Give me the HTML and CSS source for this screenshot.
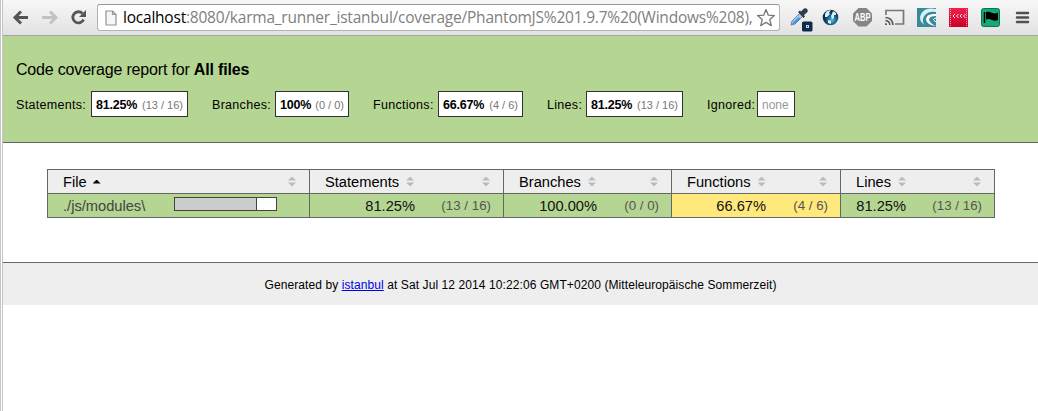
FILE: index.html
```html
<!DOCTYPE html>
<html lang="en">
<head>
<meta charset="utf-8">
<title>Code coverage report for All files</title>
<link rel="stylesheet" href="styles.css">
</head>
<body>
<div class="window">
<header class="toolbar">
  <svg class="nav" width="94" height="35" viewBox="0 0 94 35" fill="none">
    <path d="M13.500 17.500H27M20 11.500L14 17.500L20 23.500" stroke="#555" stroke-width="3"/>
    <path d="M41 17.500H55M49 11.500L55 17.500L49 23.500" stroke="#c3c3c3" stroke-width="3"/>
    <path d="M81.500 13.500A5.600 5.600 0 1 0 82.600 19.500" stroke="#555" stroke-width="2.800"/>
    <path d="M85 10V17H78Z" fill="#555"/>
  </svg>
  <div class="address">
    <svg width="12" height="16" viewBox="0 0 12 16"><path d="M1 1H7.5L11 4.5V15H1ZM7.5 1V4.5H11" fill="#f6f6f6" stroke="#929292" stroke-width="1.2"/></svg>
    <div class="url"><span>localhost</span>:8080/karma_runner_istanbul/coverage/PhantomJS%201.9.7%20(Windows%208),</div>
    <svg class="star" width="20" height="20" viewBox="0 0 20 20"><path d="M10 1.5L12.3 7.2L18.5 7.6L13.8 11.6L15.3 17.6L10 14.4L4.7 17.6L6.2 11.6L1.5 7.6L7.7 7.2Z" fill="#fff" stroke="#777" stroke-width="1.3" stroke-linejoin="round"/></svg>
  </div>
  <svg class="extensions" width="258" height="35" viewBox="780 0 258 35">
    <defs>
      <linearGradient id="red" x2="0" y2="1"><stop stop-color="#f0224b"/><stop offset="1" stop-color="#c9002a"/></linearGradient>
      <radialGradient id="globe" cx=".6" cy=".65"><stop stop-color="#69bbe0"/><stop offset=".5" stop-color="#1f6da0"/><stop offset="1" stop-color="#0b2e4c"/></radialGradient>
    </defs>
    <path d="M791 25L792 21L800 13L803 16L795 24Z" fill="#9ccdf4" stroke="#68839b"/>
    <path d="M792 23.5L799 17L800 19L794 24Z" fill="#3b8ee0"/>
    <path d="M798 12L800 10.5L801 11.5L804 8.5Q806 7.5 807.5 9.5Q808.5 11.5 806.5 13L804 15L805 16.5L803.5 18Z" fill="#343c45"/>
    <rect x="802" y="21.500" width="10.500" height="10" rx="1.500" fill="#102a4b"/><rect x="806" y="25" width="3" height="3" fill="#c5ddf5"/><rect x="807" y="26" width="1" height="1" fill="#102a4b"/>
    <circle cx="830.500" cy="17.500" r="7.800" fill="url(#globe)"/>
    <path d="M825 14L827 11L831 10L829 13L830 14L827 17L825 17ZM833 11L836 13L836 15L834 15L834 18L832 19L831 16L832 14ZM828 20L831 21L831 24L828 23Z" fill="#d9f1fa"/>
    <path d="M858.500 8H866.500L872 13.500V21L866.500 26.500H858.500L853 21V13.500Z" fill="#858585"/>
    <text class="abp" x="854.500" y="21" textLength="16" lengthAdjust="spacingAndGlyphs">ABP</text>
    <path d="M886 15V10.500H903.500V24H895" fill="none" stroke="#777" stroke-width="1.700"/>
    <path d="M885.500 17.500Q892.500 18 893 25M885.500 20.500Q889.500 21 890 25" fill="none" stroke="#555" stroke-width="1.500"/><path d="M885 23Q887 23 887 25H885Z" fill="#555"/>
    <rect x="917" y="8" width="19" height="19" fill="#388a98"/>
    <path d="M936 9Q925 7 921 14Q918 20 924 25Q921 18 926 14Q929 11 936 12" fill="#dbeff1"/><path d="M936 14Q926 13 926 20Q927 25 936 26Q929 23 929 19Q930 16 936 16" fill="#fff"/>
    <path d="M936 18Q931 19 936 22" fill="none" stroke="#fff"/>
    <rect x="949" y="8" width="19" height="19" fill="url(#red)"/>
    <path d="M950.500 9V27M966.500 9V27" stroke="#ff9aac" stroke-dasharray="1 1"/><path d="M955 14L953 16L955 18M958.500 14L956.500 16L958.500 18M962 14L960 16L962 18M965.500 14L963.500 16L965.500 18" fill="none" stroke="#ffe3e8" stroke-width="1"/>
    <rect x="981.500" y="8.500" width="18" height="18" rx="2" fill="#16a77a" stroke="#0b7454"/><path d="M984.500 12V23" stroke="#000" stroke-width="1.500"/><path d="M986 12Q989 11 992 13Q995 14 998 12.500V20Q995 21.500 992 20Q989 18.500 986 19.500Z"/>
    <path d="M1017 13H1028M1017 17.500H1028M1017 22H1028" stroke="#505050" stroke-width="2.500" stroke-linecap="round"/>
  </svg>
</header>
<main>
  <section class="summary">
    <h1>Code coverage report for <b>All files</b></h1>
    <div class="metrics">
      <div class="metric statements"><span class="name">Statements:</span><span class="value"><b>81.25%</b><small>(13 / 16)</small></span></div>
      <div class="metric branches"><span class="name">Branches:</span><span class="value"><b>100%</b><small>(0 / 0)</small></span></div>
      <div class="metric functions"><span class="name">Functions:</span><span class="value"><b>66.67%</b><small>(4 / 6)</small></span></div>
      <div class="metric lines"><span class="name">Lines:</span><span class="value"><b>81.25%</b><small>(13 / 16)</small></span></div>
      <div class="metric ignored"><span class="name">Ignored:</span><span class="value none">none</span></div>
    </div>
  </section>
  <section class="report">
    <div class="row head">
      <div class="cell"><span>File</span><i class="up"></i><i class="sort"></i></div>
      <div class="cell"><span>Statements</span><i class="sort near"></i><i class="sort"></i></div>
      <div class="cell"><span>Branches</span><i class="sort near"></i><i class="sort"></i></div>
      <div class="cell"><span>Functions</span><i class="sort near"></i><i class="sort"></i></div>
      <div class="cell"><span>Lines</span><i class="sort near"></i><i class="sort"></i></div>
    </div>
    <div class="row data">
      <div class="cell file"><span>./js/modules\</span><div class="bar"><div class="fill"></div></div></div>
      <div class="cell"><span>81.25%</span><small>(13 / 16)</small></div>
      <div class="cell"><span>100.00%</span><small class="short">(0 / 0)</small></div>
      <div class="cell medium"><span>66.67%</span><small class="short">(4 / 6)</small></div>
      <div class="cell"><span>81.25%</span><small>(13 / 16)</small></div>
    </div>
  </section>
</main>
<footer>Generated by <a href="#">istanbul</a> at Sat Jul 12 2014 10:22:06 GMT+0200 (Mitteleuropäische Sommerzeit)</footer>
</div>
</body>
</html>
```
FILE: styles.css
```css
* { box-sizing: border-box; }
body { margin: 0; background: #fff; font-family: "Liberation Sans", Arial, sans-serif; color: #000; overflow: hidden; }
.window { height: 411px; border-left: 3px double #c5c5c5; }
.toolbar { height: 36px; display: flex; align-items: flex-start; background: linear-gradient(#f7f7f7, #e2e2e2); border-bottom: 1px solid #a5a5a5; }
.nav { display: block; flex: none; margin: 0 1px 0 -2px; }
.address { width: 683px; height: 27px; margin: 4px 0 0 1px; flex: none; display: flex; align-items: center; padding-left: 7px; background: #fff; border: 1px solid #b2b2b2; border-top-color: #999; border-radius: 3px; }
.url { font-family: "Open Sans", "Noto Sans", sans-serif; font-size: 15.5px; letter-spacing: -.22px; line-height: 24px; color: #808080; width: 633px; margin: -1px 0 0 6px; white-space: nowrap; }
.url span { color: #000; }
.star { flex: none; }
.extensions { display: block; flex: none; }
.abp { font: bold 10px "Liberation Sans", sans-serif; fill: #fff; }
.summary { height: 107px; padding: 24px 0 0 13px; background: #b5d592; border-bottom: 1px solid #666; }
h1 { margin: 0; font-size: 16px; line-height: 19px; letter-spacing: -.18px; font-weight: normal; white-space: nowrap; }
.metrics { display: flex; gap: 24px; margin-top: 12px; font-size: 12.5px; }
.metric { height: 26px; display: flex; justify-content: space-between; align-items: center; white-space: nowrap; }
.statements { width: 172px; }
.branches { width: 137px; }
.functions { width: 150px; }
.lines { width: 136px; }
.ignored { width: 88px; }
.name { letter-spacing: .3px; padding-top: 1px; }
.value { height: 26px; display: flex; align-items: center; justify-content: space-between; padding: 1px 4px 0; background: #fff; border: 1px solid #333; }
.statements .value, .lines .value { width: 97px; }
.branches .value { width: 74px; }
.functions .value { width: 85px; }
.ignored .value { width: 38px; }
.value b { font-size: 12.5px; letter-spacing: -.2px; }
.value small { font-size: 11px; color: #777; }
.value.none { color: #999; font-size: 12px; }
.report { width: 948px; margin: 26px 0 0 44px; border: 1px solid #666; }
.row { display: grid; grid-template-columns: 262px 194px 168px 169px 153px; height: 23px; font-size: 14.67px; }
.data { height: 24px; border-top: 1px solid #666; background: #b5d592; color: #111; }
.head { background: #eee; }
.cell { display: flex; align-items: center; border-right: 1px solid #666; padding: 0 13px 0 15px; white-space: nowrap; }
.cell:last-child { border-right: 0; }
.data .cell { justify-content: flex-end; padding-right: 12px; }
.data .file { justify-content: flex-start; color: #444; }
.data .medium { background: #ffe87c; }
.data small { font-size: 13.33px; color: #555; width: 50px; margin-left: 26px; text-align: right; }
.data .short { width: 36px; }
.sort { width: 8px; height: 10px; margin-left: auto; background: #bbb; clip-path: polygon(50% 0, 100% 4px, 0 4px, 0 6px, 100% 6px, 50% 100%, 0 6px, 0 4px); }
.near { margin-left: 7px; }
.up { width: 8px; height: 4px; margin-left: 6px; background: #000; clip-path: polygon(50% 0, 100% 100%, 0 100%); }
.bar { width: 103px; height: 14px; margin: -3px 0 0 29px; border: 1px solid #444; background: #fff; }
.fill { width: 82px; height: 12px; background: #ccc; border-right: 1px solid #444; }
footer { height: 43px; margin-top: 44px; background: #eee; border-top: 1px solid #666; font-size: 12px; letter-spacing: .09px; line-height: 44px; text-align: center; white-space: nowrap; }
footer a { color: #00e; }
```
